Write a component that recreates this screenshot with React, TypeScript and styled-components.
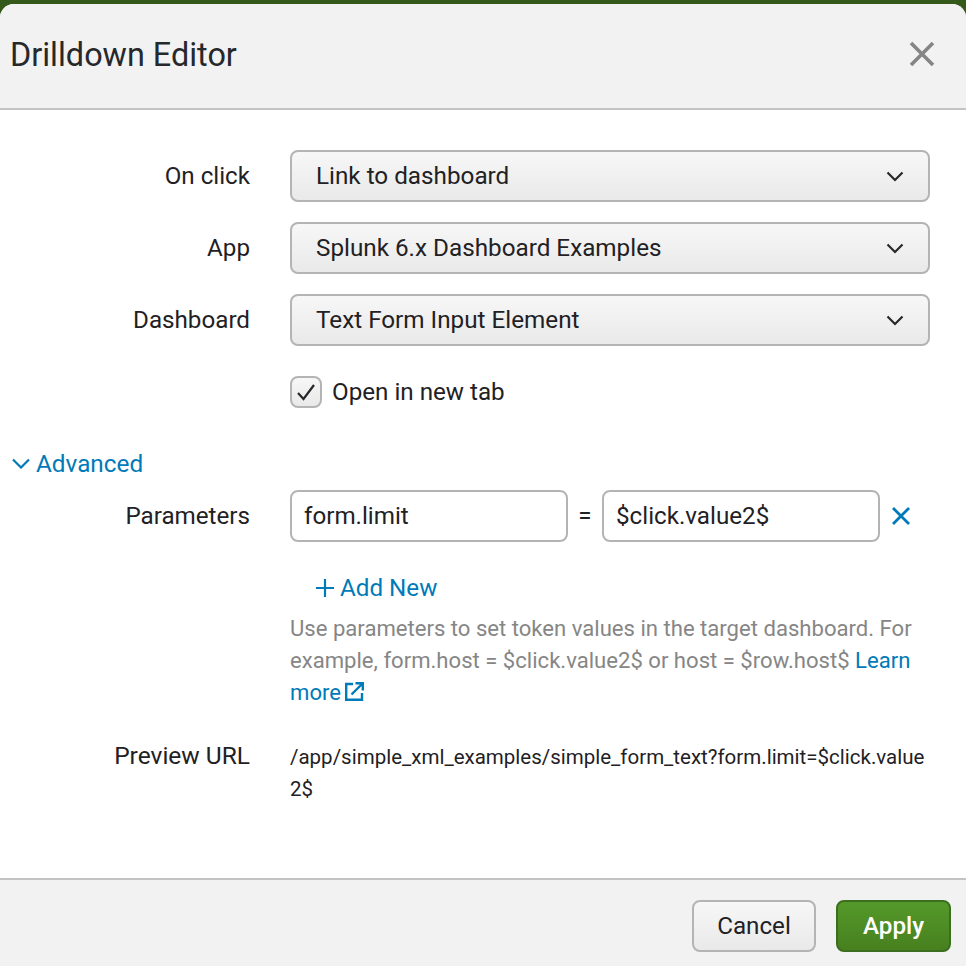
import React from "react";
import styled, { createGlobalStyle } from "styled-components";

const Global = createGlobalStyle`
  html, body { margin: 0; padding: 0; background: #35591a; }
  body { font-family: Roboto, "Liberation Sans", sans-serif; color: #1f2124; }
  #root { width: 966px; height: 966px; overflow: hidden; }
`;

const Page = styled.div`
  width: 966px;
  height: 966px;
  padding-top: 4px;
  box-sizing: border-box;
  background: #35591a;
`;
const Modal = styled.div`
  height: 962px;
  background: #fff;
  border-radius: 14px 14px 0 0;
  display: flex;
  flex-direction: column;
  overflow: hidden;
`;
const Header = styled.header`
  height: 106px;
  flex: none;
  box-sizing: border-box;
  background: #f2f2f2;
  border-bottom: 2px solid #c3c3c3;
  display: flex;
  align-items: center;
  justify-content: space-between;
  padding: 0 31px 4px 10px;
`;
const Title = styled.h1`
  margin: 2px 0 0;
  font-size: 32.4px;
  font-weight: 400;
  line-height: 40px;
  color: #26282b;
`;
const Close = styled.svg`
  width: 26px;
  height: 26px;
  display: block;
`;
const Body = styled.main`
  flex: 1;
  padding: 40px 36px 0 12px;
  display: flex;
  flex-direction: column;
`;
const Row = styled.div<{ $mt?: number }>`
  display: grid;
  grid-template-columns: 238px 1fr;
  column-gap: 40px;
  align-items: start;
  margin-top: ${(p) => p.$mt ?? 0}px;
`;
const Label = styled.label`
  text-align: right;
  font-size: 24.2px;
  line-height: 52px;
  color: #1f2124;
`;
const SelectBox = styled.div`
  height: 52px;
  box-sizing: border-box;
  border: 2px solid #b4b4b4;
  border-radius: 8px;
  background: linear-gradient(#f7f7f7, #e9e9e9);
  display: flex;
  align-items: center;
  justify-content: space-between;
  padding: 0 24px;
  font-size: 24.25px;
  color: #1f2124;
`;
const CheckLine = styled.div`
  display: flex;
  align-items: center;
  gap: 10px;
  height: 32px;
  font-size: 24.2px;
`;
const CheckBox = styled.span`
  width: 32px;
  height: 32px;
  box-sizing: border-box;
  border: 2px solid #b4b4b4;
  border-radius: 8px;
  background: linear-gradient(#f7f7f7, #e9e9e9);
  display: flex;
  align-items: center;
  justify-content: center;
`;
const AdvancedToggle = styled.div`
  display: flex;
  align-items: center;
  gap: 6px;
  margin-top: 39px;
  height: 32px;
  font-size: 24.3px;
  color: #007ab8;
`;
const ParamLine = styled.div`
  display: flex;
  align-items: center;
`;
const TextField = styled.div`
  width: 278px;
  height: 52px;
  box-sizing: border-box;
  border: 2px solid #b4b4b4;
  border-radius: 8px;
  background: #fff;
  display: flex;
  align-items: center;
  padding: 0 12px;
  font-size: 24.2px;
  color: #1f2124;
`;
const Equals = styled.span`
  width: 34px;
  text-align: center;
  font-size: 24.2px;
`;
const Remove = styled.svg`
  width: 20px;
  height: 20px;
  margin-left: 11px;
  flex: none;
`;
const AddNew = styled.div`
  display: flex;
  align-items: center;
  gap: 6px;
  margin: 30px 0 0 26px;
  height: 32px;
  font-size: 24.2px;
  color: #007ab8;
`;
const Help = styled.p`
  margin: 8px 0 0;
  font-size: 22.1px;
  line-height: 32px;
  color: #868686;
  width: 640px;
`;
const HelpLink = styled.span`
  color: #007ab8;
`;
const External = styled.svg`
  width: 19px;
  height: 19px;
  margin-left: 4px;
  vertical-align: -1px;
`;
const PreviewLabel = styled(Label)`
  font-size: 24.5px;
  line-height: 32px;
`;
const PreviewValue = styled.div`
  font-size: 20.5px;
  line-height: 32px;
  margin-top: 1px;
  color: #1f2124;
  word-break: break-all;
  width: 640px;
`;
const Footer = styled.footer`
  height: 88px;
  flex: none;
  box-sizing: border-box;
  background: #f2f2f2;
  border-top: 2px solid #c3c3c3;
  display: flex;
  justify-content: flex-end;
  align-items: flex-start;
  gap: 20px;
  padding: 20px 15px 0 0;
`;
const Button = styled.button<{ $primary?: boolean }>`
  height: 52px;
  width: ${(p) => (p.$primary ? 115 : 124)}px;
  box-sizing: border-box;
  border-radius: 8px;
  font-family: inherit;
  font-size: 24.2px;
  font-weight: ${(p) => (p.$primary ? 500 : 400)};
  padding: 0;
  border: 2px solid ${(p) => (p.$primary ? "#3b6e1e" : "#b4b4b4")};
  color: ${(p) => (p.$primary ? "#fff" : "#1f2124")};
  background: ${(p) =>
    p.$primary ? "linear-gradient(#55992a, #47801f)" : "linear-gradient(#f7f7f7, #e9e9e9)"};
`;

const Chevron = () => (
  <svg width="18" height="11" viewBox="0 0 18 11" fill="none">
    <path d="M1.5 1.5 9 9l7.5-7.5" stroke="#26282b" strokeWidth="2.2" />
  </svg>
);

export default function App() {
  return (
    <Page>
      <Global />
      <Modal>
        <Header>
          <Title>Drilldown Editor</Title>
          <Close viewBox="0 0 26 26" fill="none">
            <path d="M2 2l22 22M24 2 2 24" stroke="#858585" strokeWidth="3.6" />
          </Close>
        </Header>
        <Body>
          <Row>
            <Label>On click</Label>
            <SelectBox>Link to dashboard<Chevron /></SelectBox>
          </Row>
          <Row $mt={20}>
            <Label>App</Label>
            <SelectBox>Splunk 6.x Dashboard Examples<Chevron /></SelectBox>
          </Row>
          <Row $mt={20}>
            <Label>Dashboard</Label>
            <SelectBox>Text Form Input Element<Chevron /></SelectBox>
          </Row>
          <Row $mt={30}>
            <span />
            <CheckLine>
              <CheckBox>
                <svg width="20" height="18" viewBox="0 0 20 18" fill="none">
                  <path d="M2 10l5.5 6L18 2" stroke="#26282b" strokeWidth="2.2" />
                </svg>
              </CheckBox>
              Open in new tab
            </CheckLine>
          </Row>
          <AdvancedToggle>
            <svg width="18" height="11" viewBox="0 0 18 11" fill="none">
              <path d="M1 1.5 9 9.5l8-8" stroke="#007ab8" strokeWidth="2.2" />
            </svg>
            Advanced
          </AdvancedToggle>
          <Row $mt={11}>
            <Label>Parameters</Label>
            <div>
              <ParamLine>
                <TextField>form.limit</TextField>
                <Equals>=</Equals>
                <TextField>$click.value2$</TextField>
                <Remove viewBox="0 0 20 20" fill="none">
                  <path d="M2 2l16 16M18 2 2 18" stroke="#007ab8" strokeWidth="2.8" />
                </Remove>
              </ParamLine>
              <AddNew>
                <svg width="18" height="18" viewBox="0 0 18 18" fill="none">
                  <path d="M9 0v18M0 9h18" stroke="#007ab8" strokeWidth="2.2" />
                </svg>
                Add New
              </AddNew>
              <Help>
                Use parameters to set token values in the target dashboard. For example, form.host = $click.value2$ or host = $row.host${" "}
                <HelpLink>Learn</HelpLink>{" "}
                <HelpLink>
                  more
                  <External viewBox="0 0 19 19" fill="none">
                    <path d="M8 2H1.2v15.8H17V11" stroke="#007ab8" strokeWidth="2.4" />
                    <path d="M6.5 12.5 17 2M10.5 1.2h7.3v7.3" stroke="#007ab8" strokeWidth="2.4" />
                  </External>
                </HelpLink>
              </Help>
            </div>
          </Row>
          <Row $mt={32}>
            <PreviewLabel>Preview URL</PreviewLabel>
            <PreviewValue>/app/simple_xml_examples/simple_form_text?form.limit=$click.value2$</PreviewValue>
          </Row>
        </Body>
        <Footer>
          <Button>Cancel</Button>
          <Button $primary>Apply</Button>
        </Footer>
      </Modal>
    </Page>
  );
}
